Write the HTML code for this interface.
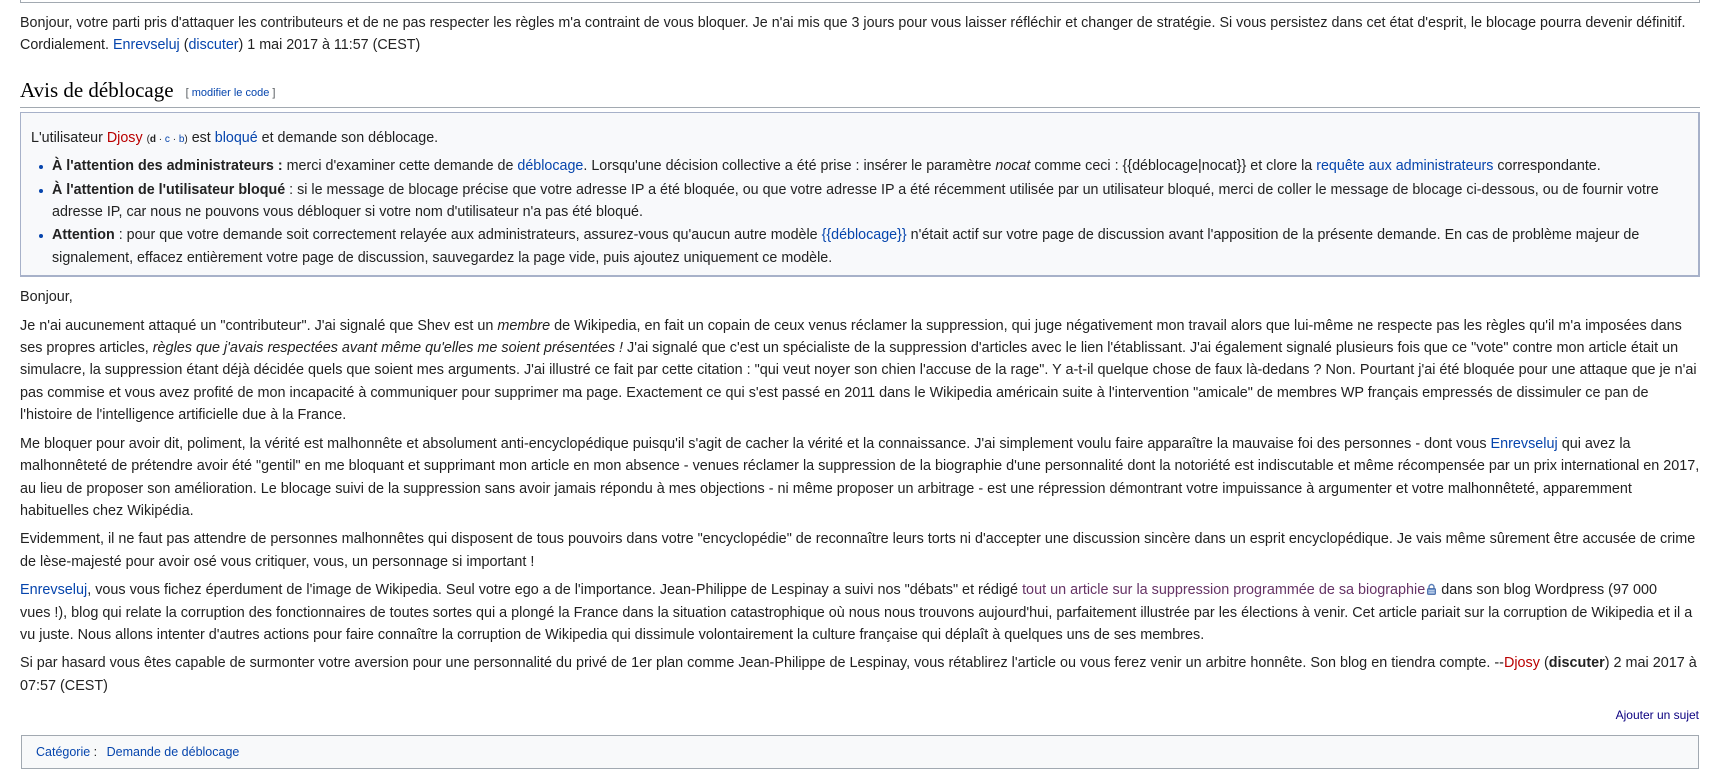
<!DOCTYPE html>
<html><head><meta charset="utf-8">
<style>
html,body{margin:0;padding:0;background:#fff;}
body{width:1716px;height:772px;overflow:hidden;position:relative;font-family:"Liberation Sans",Arial,sans-serif;font-size:14.4px;line-height:22.4px;color:#222;}
a{text-decoration:none;color:#0645ad;}
.new{color:#ba0000;}
.ext{color:#663366;}
.topbox{position:absolute;left:20px;top:-20px;width:1678px;height:22px;border:1px solid #a2a9b1;border-top:none;}
.wrap{position:absolute;left:20px;top:0;width:1680px;}
p{margin:6px 0 6px 0;}
h2{font-family:"Liberation Serif","Linux Libertine",Georgia,serif;font-weight:normal;font-size:21px;line-height:26px;margin:0;padding:0 0 1px 0;border-bottom:1px solid #a2a9b1;color:#000;}
h2 .edit{font-family:"Liberation Sans",sans-serif;font-size:11px;color:#54595d;margin-left:12px;vertical-align:1px;}
.box{border:1px solid #a7b1c9;border-width:1px 2px 2px 1px;background:#f8f9fb;padding:2px 12px 5px 10px;margin-top:4px;font-size:14.3px;line-height:22.4px;}
.box p{margin:6px 0 4px 0;}
ul{margin:3px 0 0 21px;padding:0;list-style:none;}
li{position:relative;margin-bottom:1px;}
li:before{content:"";position:absolute;left:-13px;top:10px;width:4px;height:4px;border-radius:50%;background:#0645ad;}
.small{font-size:10px;}
.lock{display:inline-block;width:11px;height:12px;vertical-align:-1px;margin-left:1px;}
.ajout{position:absolute;right:17px;top:704px;font-size:12px;color:#0b0080;}
.cat{position:absolute;left:21px;top:735px;width:1660px;height:32px;border:1px solid #a2a9b1;background:#f8f9fa;padding:0 8px;font-size:12.5px;line-height:33px;}
.cat a{margin-left:6px;}
</style></head><body>
<div class="topbox"></div>
<div class="wrap">
<p style="margin-top:12px;font-size:14.3px;line-height:22.4px">Bonjour, votre parti pris d'attaquer les contributeurs et de ne pas respecter les règles m'a contraint de vous bloquer. Je n'ai mis que 3 jours pour vous laisser réfléchir et changer de stratégie. Si vous persistez dans cet état d'esprit, le blocage pourra devenir définitif. Cordialement. <a href="#">Enrevseluj</a> (<a href="#">discuter</a>) 1 mai 2017 à 11:57 (CEST)</p>
<h2 style="margin-top:20px">Avis de déblocage<span class="edit">[ <a href="#">modifier le code</a> ]</span></h2>
<div class="box">
<p style="margin-top:12px">L'utilisateur <a class="new" href="#">Djosy</a> <span class="small">(<b><a href="#" style="color:#222">d</a></b> · <a href="#">c</a> · <a href="#">b</a>)</span> est <a href="#">bloqué</a> et demande son déblocage.</p>
<ul>
<li><b>À l'attention des administrateurs :</b> merci d'examiner cette demande de <a href="#">déblocage</a>. Lorsqu'une décision collective a été prise : insérer le paramètre <i>nocat</i> comme ceci : {{déblocage|nocat}} et clore la <a href="#">requête aux administrateurs</a> correspondante.</li>
<li><b>À l'attention de l'utilisateur bloqué</b> : si le message de blocage précise que votre adresse IP a été bloquée, ou que votre adresse IP a été récemment utilisée par un utilisateur bloqué, merci de coller le message de blocage ci-dessous, ou de fournir votre adresse IP, car nous ne pouvons vous débloquer si votre nom d'utilisateur n'a pas été bloqué.</li>
<li><b>Attention</b> : pour que votre demande soit correctement relayée aux administrateurs, assurez-vous qu'aucun autre modèle <a href="#">{{déblocage}}</a> n'était actif sur votre page de discussion avant l'apposition de la présente demande. En cas de problème majeur de signalement, effacez entièrement votre page de discussion, sauvegardez la page vide, puis ajoutez uniquement ce modèle.</li>
</ul>
</div>
<p style="margin-top:9px">Bonjour,</p>
<p>Je n'ai aucunement attaqué un "contributeur". J'ai signalé que Shev est un <i>membre</i> de Wikipedia, en fait un copain de ceux venus réclamer la suppression, qui juge négativement mon travail alors que lui-même ne respecte pas les règles qu'il m'a imposées dans ses propres articles, <i>règles que j'avais respectées avant même qu'elles me soient présentées !</i> J'ai signalé que c'est un spécialiste de la suppression d'articles avec le lien l'établissant. J'ai également signalé plusieurs fois que ce "vote" contre mon article était un simulacre, la suppression étant déjà décidée quels que soient mes arguments. J'ai illustré ce fait par cette citation : "qui veut noyer son chien l'accuse de la rage". Y a-t-il quelque chose de faux là-dedans ? Non. Pourtant j'ai été bloquée pour une attaque que je n'ai pas commise et vous avez profité de mon incapacité à communiquer pour supprimer ma page. Exactement ce qui s'est passé en 2011 dans le Wikipedia américain suite à l'intervention "amicale" de membres WP français empressés de dissimuler ce pan de l'histoire de l'intelligence artificielle due à la France.</p>
<p>Me bloquer pour avoir dit, poliment, la vérité est malhonnête et absolument anti-encyclopédique puisqu'il s'agit de cacher la vérité et la connaissance. J'ai simplement voulu faire apparaître la mauvaise foi des personnes - dont vous <a href="#">Enrevseluj</a> qui avez la malhonnêteté de prétendre avoir été "gentil" en me bloquant et supprimant mon article en mon absence - venues réclamer la suppression de la biographie d'une personnalité dont la notoriété est indiscutable et même récompensée par un prix international en 2017, au lieu de proposer son amélioration. Le blocage suivi de la suppression sans avoir jamais répondu à mes objections - ni même proposer un arbitrage - est une répression démontrant votre impuissance à argumenter et votre malhonnêteté, apparemment habituelles chez Wikipédia.</p>
<p>Evidemment, il ne faut pas attendre de personnes malhonnêtes qui disposent de tous pouvoirs dans votre "encyclopédie" de reconnaître leurs torts ni d'accepter une discussion sincère dans un esprit encyclopédique. Je vais même sûrement être accusée de crime de lèse-majesté pour avoir osé vous critiquer, vous, un personnage si important !</p>
<p><a href="#">Enrevseluj</a>, vous vous fichez éperdument de l'image de Wikipedia. Seul votre ego a de l'importance. Jean-Philippe de Lespinay a suivi nos "débats" et rédigé <a class="ext" href="#">tout un article sur la suppression programmée de sa biographie</a><svg class="lock" viewBox="0 0 11 12"><path d="M3 5.5V4a2.5 2.5 0 0 1 5 0v1.5" fill="none" stroke="#5a7fb8" stroke-width="1.4"/><rect x="1.5" y="5.5" width="8" height="6" rx="1" fill="#6a90c8" stroke="#3e62a0" stroke-width=".8"/><rect x="2.5" y="7.3" width="6" height="1" fill="#dbe6f6"/><rect x="2.5" y="9.3" width="6" height="1" fill="#dbe6f6"/></svg> dans son blog Wordpress (97 000 vues&nbsp;!),&nbsp;blog qui relate la corruption des fonctionnaires de toutes sortes qui a plongé la France dans la situation catastrophique où nous nous trouvons aujourd'hui, parfaitement illustrée par les élections à venir. Cet article pariait sur la corruption de Wikipedia et il a vu juste. Nous allons intenter d'autres actions pour faire connaître la corruption de Wikipedia qui dissimule volontairement la culture française qui déplaît à quelques uns de ses membres.</p>
<p>Si par hasard vous êtes capable de surmonter votre aversion pour une personnalité du privé de 1er plan comme Jean-Philippe de Lespinay, vous rétablirez l'article ou vous ferez venir un arbitre honnête. Son blog en tiendra compte. --<a class="new" href="#">Djosy</a> (<b><a href="#" style="color:#222">discuter</a></b>) 2 mai 2017 à 07:57 (CEST)</p>
</div>
<div class="ajout">Ajouter un sujet</div>
<div class="cat"><a href="#">Catégorie</a> : <a href="#">Demande de déblocage</a></div>
</body></html>
